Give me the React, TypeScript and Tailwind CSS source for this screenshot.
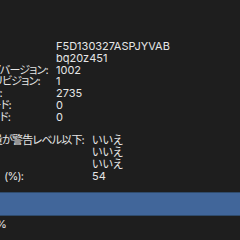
const rowsA = [
  { label: "", value: "F5D130327ASPJYVAB", mr: 0 },
  { label: "", value: "bq20z451", mr: 0 },
  { label: "ファームウェアバージョン:", value: "1002", mr: 8 },
  { label: "ハードウェアリビジョン:", value: "1", mr: 16 },
  { label: "セルリビジョン:", value: "2735", mr: 54 },
  { label: "パックロットコード:", value: "0", mr: 45 },
  { label: "PCBロットコード:", value: "0", mr: 46 },
]

const rowsB = [
  { label: "充電残量が警告レベル以下:", value: "いいえ", mr: 8 },
  { label: "", value: "いいえ", mr: 0 },
  { label: "", value: "いいえ", mr: 0 },
  { label: "充電状態\u3000(%):", value: "54", mr: 69 },
]

const mrClass: Record<number, string> = {
  0: "mr-0",
  8: "mr-[8px]",
  16: "mr-[16px]",
  45: "mr-[45px]",
  46: "mr-[46px]",
  54: "mr-[54px]",
  69: "mr-[69px]",
}

function Row({ label, value, mr, col }: { label: string; value: string; mr: number; col: string }) {
  return (
    <div className="flex">
      <div className={`${col} shrink-0 flex justify-end`}>
        <span className={`whitespace-nowrap tracking-[-0.8px] ${mrClass[mr]}`}>{label}</span>
      </div>
      <span className="whitespace-nowrap">{value}</span>
    </div>
  )
}

export default function App() {
  return (
    <div
      className="w-[240px] h-[240px] overflow-hidden bg-[#1e1e1e] text-[#e6e6e6] text-[11px] leading-[11.8px] [font-feature-settings:'palt'] pt-[41px]"
      style={{ fontFamily: "Inter, 'Noto Sans CJK JP', sans-serif" }}
    >
      {rowsA.map((r, i) => (
        <Row key={i} {...r} col="w-[56px]" />
      ))}
      <div className="h-[11.8px]" />
      {rowsB.map((r, i) => (
        <Row key={i} {...r} col="w-[92px]" />
      ))}
      <div className="mt-[9px] h-[24px] bg-[#41669a] border-y border-[#2f4b6c]" />
      <div className="pt-[3px] -ml-[4px] whitespace-nowrap">%</div>
    </div>
  )
}
